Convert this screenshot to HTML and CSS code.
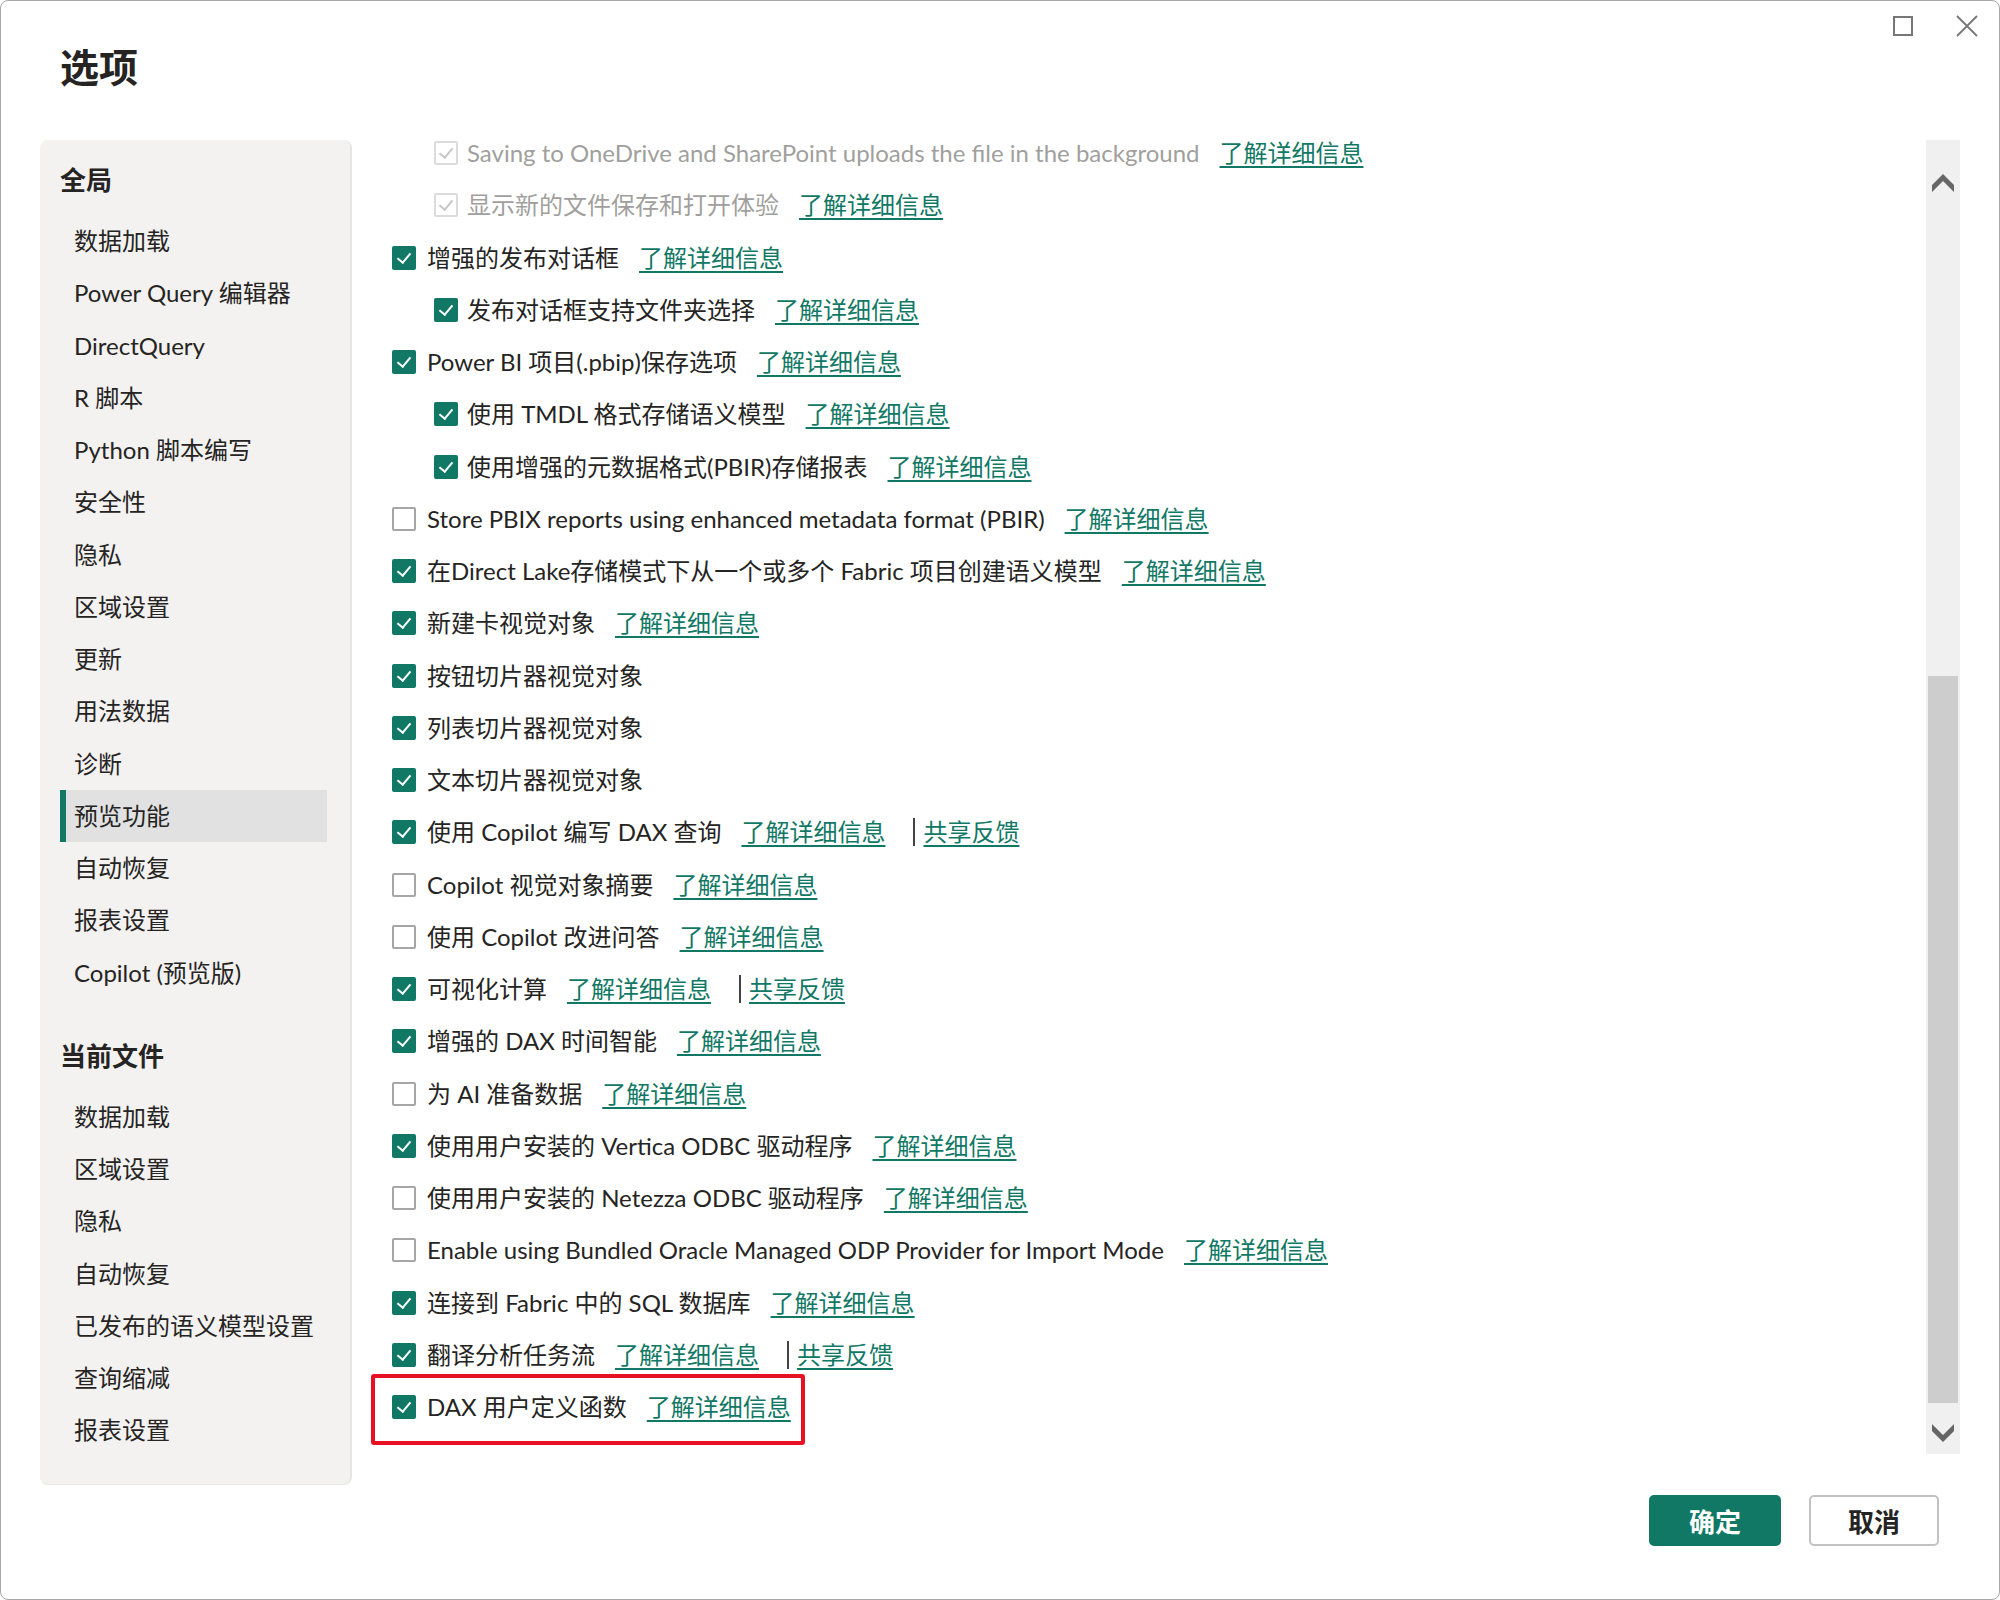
FILE: index.html
```html
<!DOCTYPE html>
<html lang="zh-CN">
<head>
<meta charset="utf-8">
<title>选项</title>
<link rel="stylesheet" href="styles.css">
</head>
<body>
<div class="dialog">
  <div class="titlebar">
    <svg class="winbtn max" width="22" height="22" viewBox="0 0 22 22"><rect x="1" y="2" width="18" height="18" fill="none" stroke="#777" stroke-width="2"/></svg>
    <svg class="winbtn close" width="22" height="22" viewBox="0 0 22 22"><path d="M1 1 L21 21 M21 1 L1 21" stroke="#777" stroke-width="1.8" fill="none"/></svg>
  </div>
  <h1 class="title">选项</h1>
  <div class="main">
    <nav class="nav">
      <div class="nav-head">全局</div>
      <div class="nav-item">数据加载</div>
      <div class="nav-item">Power Query 编辑器</div>
      <div class="nav-item">DirectQuery</div>
      <div class="nav-item">R 脚本</div>
      <div class="nav-item">Python 脚本编写</div>
      <div class="nav-item">安全性</div>
      <div class="nav-item">隐私</div>
      <div class="nav-item">区域设置</div>
      <div class="nav-item">更新</div>
      <div class="nav-item">用法数据</div>
      <div class="nav-item">诊断</div>
      <div class="nav-item selected">预览功能</div>
      <div class="nav-item">自动恢复</div>
      <div class="nav-item">报表设置</div>
      <div class="nav-item">Copilot (预览版)</div>
      <div class="nav-head second">当前文件</div>
      <div class="nav-item">数据加载</div>
      <div class="nav-item">区域设置</div>
      <div class="nav-item">隐私</div>
      <div class="nav-item">自动恢复</div>
      <div class="nav-item">已发布的语义模型设置</div>
      <div class="nav-item">查询缩减</div>
      <div class="nav-item">报表设置</div>
    </nav>
    <div class="content">
      <div class="row indent disabled"><span class="cb on"></span><span class="label">Saving to OneDrive and SharePoint uploads the file in the background</span><a class="link">了解详细信息</a></div>
      <div class="row indent disabled"><span class="cb on"></span><span class="label">显示新的文件保存和打开体验</span><a class="link">了解详细信息</a></div>
      <div class="row"><span class="cb on"></span><span class="label">增强的发布对话框</span><a class="link">了解详细信息</a></div>
      <div class="row indent"><span class="cb on"></span><span class="label">发布对话框支持文件夹选择</span><a class="link">了解详细信息</a></div>
      <div class="row"><span class="cb on"></span><span class="label">Power BI 项目(.pbip)保存选项</span><a class="link">了解详细信息</a></div>
      <div class="row indent"><span class="cb on"></span><span class="label">使用 TMDL 格式存储语义模型</span><a class="link">了解详细信息</a></div>
      <div class="row indent"><span class="cb on"></span><span class="label">使用增强的元数据格式(PBIR)存储报表</span><a class="link">了解详细信息</a></div>
      <div class="row"><span class="cb"></span><span class="label">Store PBIX reports using enhanced metadata format (PBIR)</span><a class="link">了解详细信息</a></div>
      <div class="row"><span class="cb on"></span><span class="label">在Direct Lake存储模式下从一个或多个 Fabric 项目创建语义模型</span><a class="link">了解详细信息</a></div>
      <div class="row"><span class="cb on"></span><span class="label">新建卡视觉对象</span><a class="link">了解详细信息</a></div>
      <div class="row"><span class="cb on"></span><span class="label">按钮切片器视觉对象</span></div>
      <div class="row"><span class="cb on"></span><span class="label">列表切片器视觉对象</span></div>
      <div class="row"><span class="cb on"></span><span class="label">文本切片器视觉对象</span></div>
      <div class="row"><span class="cb on"></span><span class="label">使用 Copilot 编写 DAX 查询</span><a class="link">了解详细信息</a><span class="sep"></span><a class="link fb">共享反馈</a></div>
      <div class="row"><span class="cb"></span><span class="label">Copilot 视觉对象摘要</span><a class="link">了解详细信息</a></div>
      <div class="row"><span class="cb"></span><span class="label">使用 Copilot 改进问答</span><a class="link">了解详细信息</a></div>
      <div class="row"><span class="cb on"></span><span class="label">可视化计算</span><a class="link">了解详细信息</a><span class="sep"></span><a class="link fb">共享反馈</a></div>
      <div class="row"><span class="cb on"></span><span class="label">增强的 DAX 时间智能</span><a class="link">了解详细信息</a></div>
      <div class="row"><span class="cb"></span><span class="label">为 AI 准备数据</span><a class="link">了解详细信息</a></div>
      <div class="row"><span class="cb on"></span><span class="label">使用用户安装的 Vertica ODBC 驱动程序</span><a class="link">了解详细信息</a></div>
      <div class="row"><span class="cb"></span><span class="label">使用用户安装的 Netezza ODBC 驱动程序</span><a class="link">了解详细信息</a></div>
      <div class="row"><span class="cb"></span><span class="label">Enable using Bundled Oracle Managed ODP Provider for Import Mode</span><a class="link">了解详细信息</a></div>
      <div class="row"><span class="cb on"></span><span class="label">连接到 Fabric 中的 SQL 数据库</span><a class="link">了解详细信息</a></div>
      <div class="row"><span class="cb on"></span><span class="label">翻译分析任务流</span><a class="link">了解详细信息</a><span class="sep"></span><a class="link fb">共享反馈</a></div>
      <div class="row highlighted"><span class="cb on"></span><span class="label">DAX 用户定义函数</span><a class="link">了解详细信息</a><span class="redbox"></span></div>
    </div>
    <div class="scrollbar">
      <svg class="arrow" width="22" height="18" viewBox="0 0 22 18"><path d="M0 11 L11 0 L22 11 L22 18 L11 7 L0 18 Z" fill="#666"/></svg>
      <div class="thumb-space"><div class="thumb"></div></div>
      <svg class="arrow" width="22" height="18" viewBox="0 0 22 18"><path d="M0 0 L11 11 L22 0 L22 7 L11 18 L0 7 Z" fill="#666"/></svg>
    </div>
  </div>
  <div class="footer">
    <button class="btn primary">确定</button>
    <button class="btn">取消</button>
  </div>
</div>
</body>
</html>
```
FILE: styles.css
```css
html, body {
  margin: 0;
  padding: 0;
  background: #ffffff;
}
body {
  font-family: Lato, "Noto Sans CJK SC", sans-serif;
  color: #252423;
}
.dialog {
  width: 2000px;
  height: 1600px;
  box-sizing: border-box;
  border: 1px solid #a8a8a8;
  border-radius: 8px;
  position: relative;
  display: flex;
  flex-direction: column;
  overflow: hidden;
  background: #fff;
}
.titlebar {
  height: 38px;
  display: flex;
  justify-content: flex-end;
  align-items: flex-start;
  padding: 14px 21px 0 0;
  box-sizing: border-box;
  gap: 41px;
}
.title {
  margin: 0 0 49px 0;
  padding-left: 59px;
  font-family: "Noto Sans CJK SC", sans-serif;
  font-size: 39px;
  font-weight: 700;
  line-height: 52px;
  height: 52px;
  color: #252423;
}
.main {
  display: flex;
  align-items: flex-start;
  height: 1345px;
  padding-left: 39px;
}
.nav {
  width: 312px;
  height: 1345px;
  box-sizing: border-box;
  background: #f3f2f1;
  border-radius: 8px;
  border-right: 2px solid #e6e5e4;
  border-bottom: 1px solid #e8e7e6;
  padding: 19px 23px 0 20px;
  flex: none;
}
.nav-head {
  font-family: "Noto Sans CJK SC", sans-serif;
  font-size: 26px;
  font-weight: 700;
  line-height: 40px;
  height: 40px;
  margin-bottom: 16px;
}
.nav-head.second {
  margin-top: 36px;
}
.nav-item {
  height: 52.25px;
  line-height: 52px;
  font-size: 24px;
  padding-left: 14px;
  color: #252423;
  white-space: nowrap;
}
.nav-item.selected {
  background: #e1e1e1;
  border-left: 6px solid #117865;
  padding-left: 8px;
}
.content {
  width: 1534px;
  flex: none;
  min-width: 0;
  margin-left: 40px;
  margin-top: -13px;
}
.row {
  height: 52.25px;
  display: flex;
  align-items: center;
  font-size: 24px;
  white-space: nowrap;
  position: relative;
}
.row.indent {
  padding-left: 42px;
}
.cb {
  width: 24px;
  height: 24px;
  box-sizing: border-box;
  border: 2px solid #a6a6a6;
  border-radius: 2px;
  margin-right: 11px;
  flex: none;
  position: relative;
  background: #fff;
}
.row.indent .cb {
  margin-right: 9px;
}
.cb.on {
  background: #117865;
  border-color: #117865;
}
.cb.on::after {
  content: "";
  position: absolute;
  left: 6px;
  top: 2px;
  width: 6px;
  height: 11px;
  border-right: 2px solid #fff;
  border-bottom: 2px solid #fff;
  transform: rotate(40deg);
}
.row.disabled .cb.on {
  background: #fff;
  border-color: #dcdcdc;
}
.row.disabled .cb.on::after {
  border-color: #c6c6c6;
}
.label {
  line-height: 30px;
}
.row.disabled .label {
  color: #a19f9d;
}
.link {
  margin-left: 20px;
  color: #117865;
  text-decoration: underline;
  text-decoration-thickness: 2px;
  text-underline-offset: 4px;
  line-height: 30px;
  cursor: pointer;
}
.sep {
  width: 2px;
  height: 28px;
  background: #444;
  margin-left: 28px;
}
.link.fb {
  margin-left: 8px;
}
.redbox {
  position: absolute;
  left: -21px;
  top: -7px;
  width: 434px;
  height: 71px;
  box-sizing: border-box;
  border: 4px solid #e81123;
  border-radius: 3px;
  pointer-events: none;
}
.scrollbar {
  width: 34px;
  height: 1314px;
  background: #f0f0f0;
  flex: none;
  display: flex;
  flex-direction: column;
  align-items: center;
  box-sizing: border-box;
  padding: 34px 0 12px 0;
}
.arrow {
  flex: none;
}
.thumb-space {
  flex: 1;
  width: 100%;
  padding: 0 2px;
  box-sizing: border-box;
  display: flex;
  flex-direction: column;
}
.thumb {
  margin-top: 484px;
  height: 727px;
  background: #cdcdcd;
}
.footer {
  display: flex;
  justify-content: flex-end;
  gap: 28px;
  padding: 10px 60px 0 0;
}
.btn {
  height: 51px;
  width: 130px;
  border-radius: 5px;
  font-family: "Noto Sans CJK SC", sans-serif;
  font-size: 26px;
  font-weight: 700;
  border: 2px solid #c2c2c2;
  background: #fff;
  color: #252423;
  padding: 0;
}
.btn.primary {
  width: 132px;
  background: #117865;
  border-color: #117865;
  color: #fff;
}
```
